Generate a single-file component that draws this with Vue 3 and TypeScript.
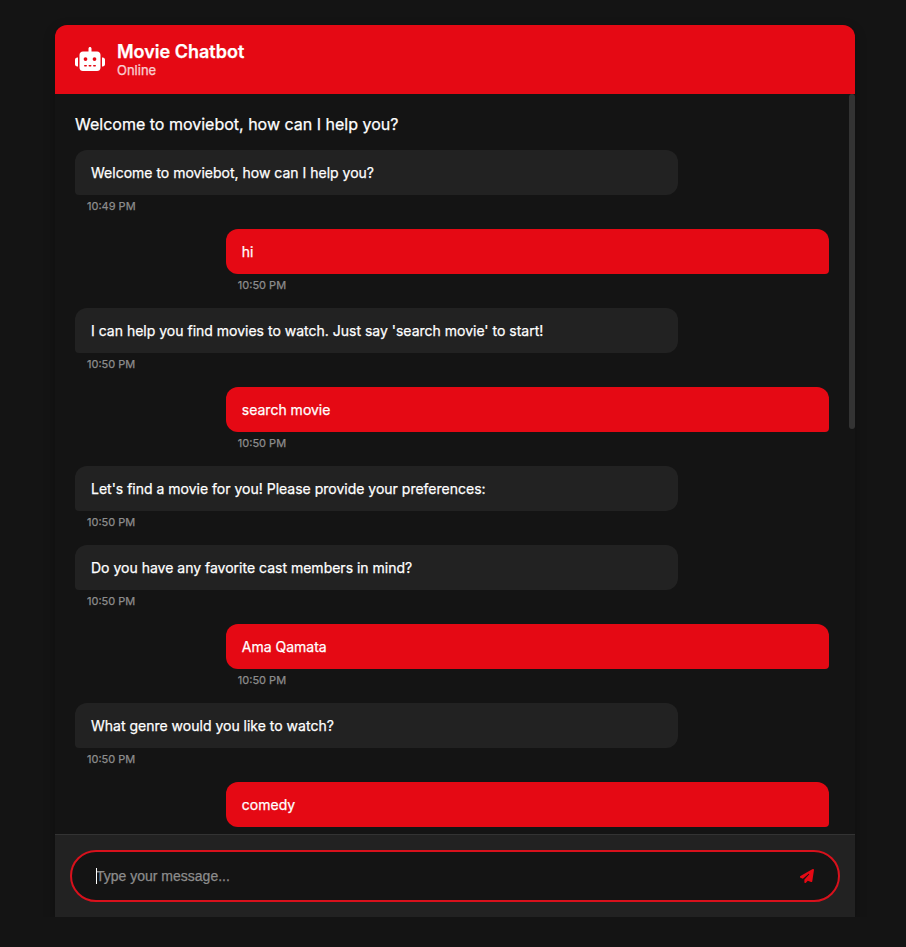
<script setup lang="ts">
import { ref } from 'vue'

interface Message {
  id: number
  sender: 'bot' | 'user'
  text: string
  time?: string
}

const greeting = 'Welcome to moviebot, how can I help you?'
const draft = ref('')

const messages = ref<Message[]>([
  { id: 1, sender: 'bot', text: greeting, time: '10:49 PM' },
  { id: 2, sender: 'user', text: 'hi', time: '10:50 PM' },
  { id: 3, sender: 'bot', text: "I can help you find movies to watch. Just say 'search movie' to start!", time: '10:50 PM' },
  { id: 4, sender: 'user', text: 'search movie', time: '10:50 PM' },
  { id: 5, sender: 'bot', text: "Let's find a movie for you! Please provide your preferences:", time: '10:50 PM' },
  { id: 6, sender: 'bot', text: 'Do you have any favorite cast members in mind?', time: '10:50 PM' },
  { id: 7, sender: 'user', text: 'Ama Qamata', time: '10:50 PM' },
  { id: 8, sender: 'bot', text: 'What genre would you like to watch?', time: '10:50 PM' },
  { id: 9, sender: 'user', text: 'comedy' },
])
</script>

<template>
  <main class="chat">
    <header class="header">
      <svg class="robot" viewBox="0 0 640 512" aria-hidden="true">
        <path d="M320 0c17.7 0 32 14.3 32 32V96H472c39.8 0 72 32.2 72 72V440c0 39.8-32.2 72-72 72H168c-39.8 0-72-32.2-72-72V168c0-39.8 32.2-72 72-72H288V32c0-17.7 14.3-32 32-32zM208 384c-8.8 0-16 7.2-16 16s7.2 16 16 16h32c8.8 0 16-7.2 16-16s-7.2-16-16-16H208zm96 0c-8.8 0-16 7.2-16 16s7.2 16 16 16h32c8.8 0 16-7.2 16-16s-7.2-16-16-16H304zm96 0c-8.8 0-16 7.2-16 16s7.2 16 16 16h32c8.8 0 16-7.2 16-16s-7.2-16-16-16H400zM264 256a40 40 0 1 0 -80 0 40 40 0 1 0 80 0zm152 40a40 40 0 1 0 0-80 40 40 0 1 0 0 80zM48 224H64V416H48c-26.5 0-48-21.5-48-48V272c0-26.5 21.5-48 48-48zm544 0c26.5 0 48 21.5 48 48v96c0 26.5-21.5 48-48 48H576V224h16z" />
      </svg>
      <div class="heading">
        <h1 class="title">Movie Chatbot</h1>
        <span class="status">Online</span>
      </div>
    </header>

    <section class="body">
      <div class="messages">
        <p class="greeting">{{ greeting }}</p>
        <div v-for="m in messages" :key="m.id" class="message" :class="m.sender">
          <div class="bubble">{{ m.text }}</div>
          <div v-if="m.time" class="time">{{ m.time }}</div>
        </div>
      </div>
      <div class="track"><div class="thumb"></div></div>
    </section>

    <footer class="footer">
      <form class="field" @submit.prevent>
        <span class="caret"></span>
        <input v-model="draft" class="input" type="text" placeholder="Type your message..." />
        <button class="send" type="submit" aria-label="Send">
          <svg class="plane" viewBox="0 0 512 512" aria-hidden="true">
            <path d="M498.1 5.6c10.1 7 15.4 19.1 13.5 31.2l-64 416c-1.5 9.7-7.4 18.2-16 23s-18.9 5.4-28 1.6L284 427.7l-68.5 74.1c-8.9 9.7-22.9 12.9-35.2 8.1S160 493.2 160 480V396.4c0-4 1.5-7.8 4.2-10.7L331.8 202.8c5.8-6.3 5.6-16-.4-22s-15.7-6.4-22-.7L106 360.8 17.7 316.6C7.1 311.3 .3 300.7 0 288.9s5.9-22.8 16.1-28.7l448-256c10.7-6.1 23.9-5.5 34 1.4z" />
          </svg>
        </button>
      </form>
    </footer>
  </main>
</template>

<style>
body {
  background: #141414;
}
</style>

<style scoped>
.chat {
  box-sizing: border-box;
  display: flex;
  flex-direction: column;
  width: 800px;
  height: 892px;
  margin: 25px 0 0 55px;
  border-radius: 12px 12px 0 0;
  background: #141414;
  box-shadow: 0 4px 12px rgba(0, 0, 0, 0.3);
  font-family: Inter, 'Liberation Sans', sans-serif;
  color: #fff;
  -webkit-text-stroke: 0.25px currentColor;
}
.header {
  box-sizing: border-box;
  display: flex;
  align-items: center;
  gap: 12px;
  flex: none;
  height: 69px;
  padding: 0 20px 2px;
  border-radius: 12px 12px 0 0;
  background: #e50914;
}
.robot {
  width: 30px;
  height: 24px;
  fill: #fff;
}
.heading {
  display: flex;
  flex-direction: column;
}
.title {
  margin: 0;
  font-size: 18px;
  line-height: 24px;
  font-weight: 600;
}
.status {
  margin-top: -1px;
  font-size: 13px;
  line-height: 14px;
  opacity: 0.8;
}
.body {
  display: flex;
  flex: 1;
  min-height: 0;
  overflow: hidden;
}
.messages {
  flex: 1;
  padding: 20px;
}
.greeting {
  margin: 0 0 16px;
  font-size: 16px;
  line-height: 20px;
}
.message {
  width: 80%;
  margin-bottom: 16px;
}
.user {
  margin-left: auto;
}
.bubble {
  padding: 14px 16px;
  border-radius: 12px;
  font-size: 14px;
  line-height: 17px;
}
.bot .bubble {
  background: #222;
  border-bottom-left-radius: 4px;
}
.user .bubble {
  background: #e50914;
  border-bottom-right-radius: 4px;
}
.time {
  margin-top: 4px;
  padding-left: 12px;
  font-size: 11px;
  line-height: 14px;
  color: #8c8c8c;
}
.track {
  width: 6px;
}
.thumb {
  height: 335px;
  border-radius: 3px;
  background: #333;
}
.footer {
  flex: none;
  padding: 15px;
  border-top: 1px solid #333;
  background: #222;
}
.field {
  position: relative;
  box-sizing: border-box;
  display: flex;
  align-items: center;
  height: 52px;
  padding: 0 24px;
  border: 2px solid #d8111c;
  border-radius: 26px;
  background: #141414;
}
.caret {
  position: absolute;
  left: 24px;
  top: 16px;
  width: 1px;
  height: 16px;
  background: #fff;
}
.input {
  flex: 1;
  min-width: 0;
  padding: 0;
  border: 0;
  outline: 0;
  background: transparent;
  color: #fff;
  font-family: 'Liberation Sans', Arial, sans-serif;
  font-size: 14px;
}
.input::placeholder {
  color: #8c8c8c;
}
.send {
  display: flex;
  padding: 0;
  border: 0;
  background: transparent;
}
.plane {
  width: 14px;
  height: 14px;
  fill: #e50914;
}
</style>
